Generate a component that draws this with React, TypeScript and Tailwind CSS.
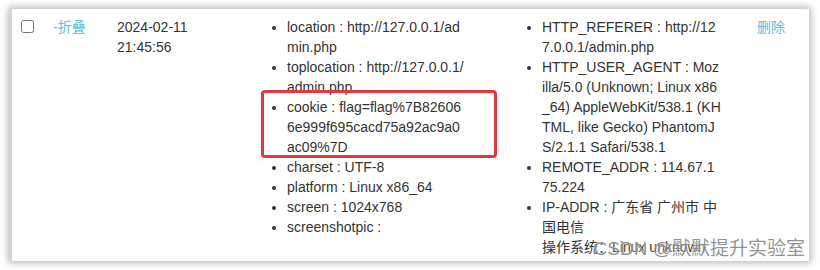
import React from 'react';

const font = { fontFamily: '"Liberation Sans", Arial, "Noto Sans CJK SC", sans-serif' };

const colA = [
  'location : http://127.0.0.1/admin.php',
  'toplocation : http://127.0.0.1/admin.php',
  'cookie : flag=flag%7B826066e999f695cacd75a92ac9a0ac09%7D',
  'charset : UTF-8',
  'platform : Linux x86_64',
  'screen : 1024x768',
  'screenshotpic : ',
];

const colB = [
  'HTTP_REFERER : http://127.0.0.1/admin.php',
  'HTTP_USER_AGENT : Mozilla/5.0 (Unknown; Linux x86_64) AppleWebKit/538.1 (KHTML, like Gecko) PhantomJS/2.1.1 Safari/538.1',
  'REMOTE_ADDR : 114.67.175.224',
];

export default function App() {
  return (
    <div className="w-[820px] h-[270px] bg-white pt-[9px] pl-[10px]" style={font}>
      <div className="relative w-[799px] h-[252px] bg-white overflow-hidden border-l-2 border-[#d4d4d4] shadow-[0_0_7px_2px_rgba(0,0,0,0.28)] text-[14px] leading-[20px] text-[#333]">
        <div className="absolute left-[-2px] top-[60px] w-[2px] h-[42px] bg-[#b5dde6]" />
        <div className="flex items-start pt-[8px]">
          <div className="w-[41px] pl-[9px] pt-[3px] shrink-0">
            <input type="checkbox" className="block w-[13px] h-[13px] m-0" />
          </div>
          <div className="w-[64px] shrink-0 text-[#5bc0de]">-折叠</div>
          <div className="w-[140px] shrink-0 w-[140px]">
            <div className="w-[80px]">2024-02-11 21:45:56</div>
          </div>
          <div className="w-[255px] shrink-0">
            <ul className="list-disc pl-[30px] w-[209px] break-all">
              {colA.map((t, i) => (
                <li key={i}>{t}</li>
              ))}
            </ul>
          </div>
          <div className="w-[245px] shrink-0">
            <ul className="list-disc pl-[30px] w-[209px] break-all">
              {colB.map((t, i) => (
                <li key={i}>{t}</li>
              ))}
              <li>
                IP-ADDR : 广东省 广州市 中国电信
                <br />
                操作系统：Linux unknown
              </li>
            </ul>
          </div>
          <div className="text-[#5bc0de] pl-[0px]">删除</div>
        </div>
        <div className="absolute left-[249px] top-[81px] w-[236px] h-[68px] border-[3px] border-[#e5383b] rounded-[4px]" />
        <div
          className="absolute right-[4px] bottom-[0px] text-[19px] leading-[24px] text-[rgba(110,110,110,0.75)] [text-shadow:0_0_2px_#fff]"
          style={font}
        >
          CSDN @默默提升实验室
        </div>
      </div>
    </div>
  );
}
